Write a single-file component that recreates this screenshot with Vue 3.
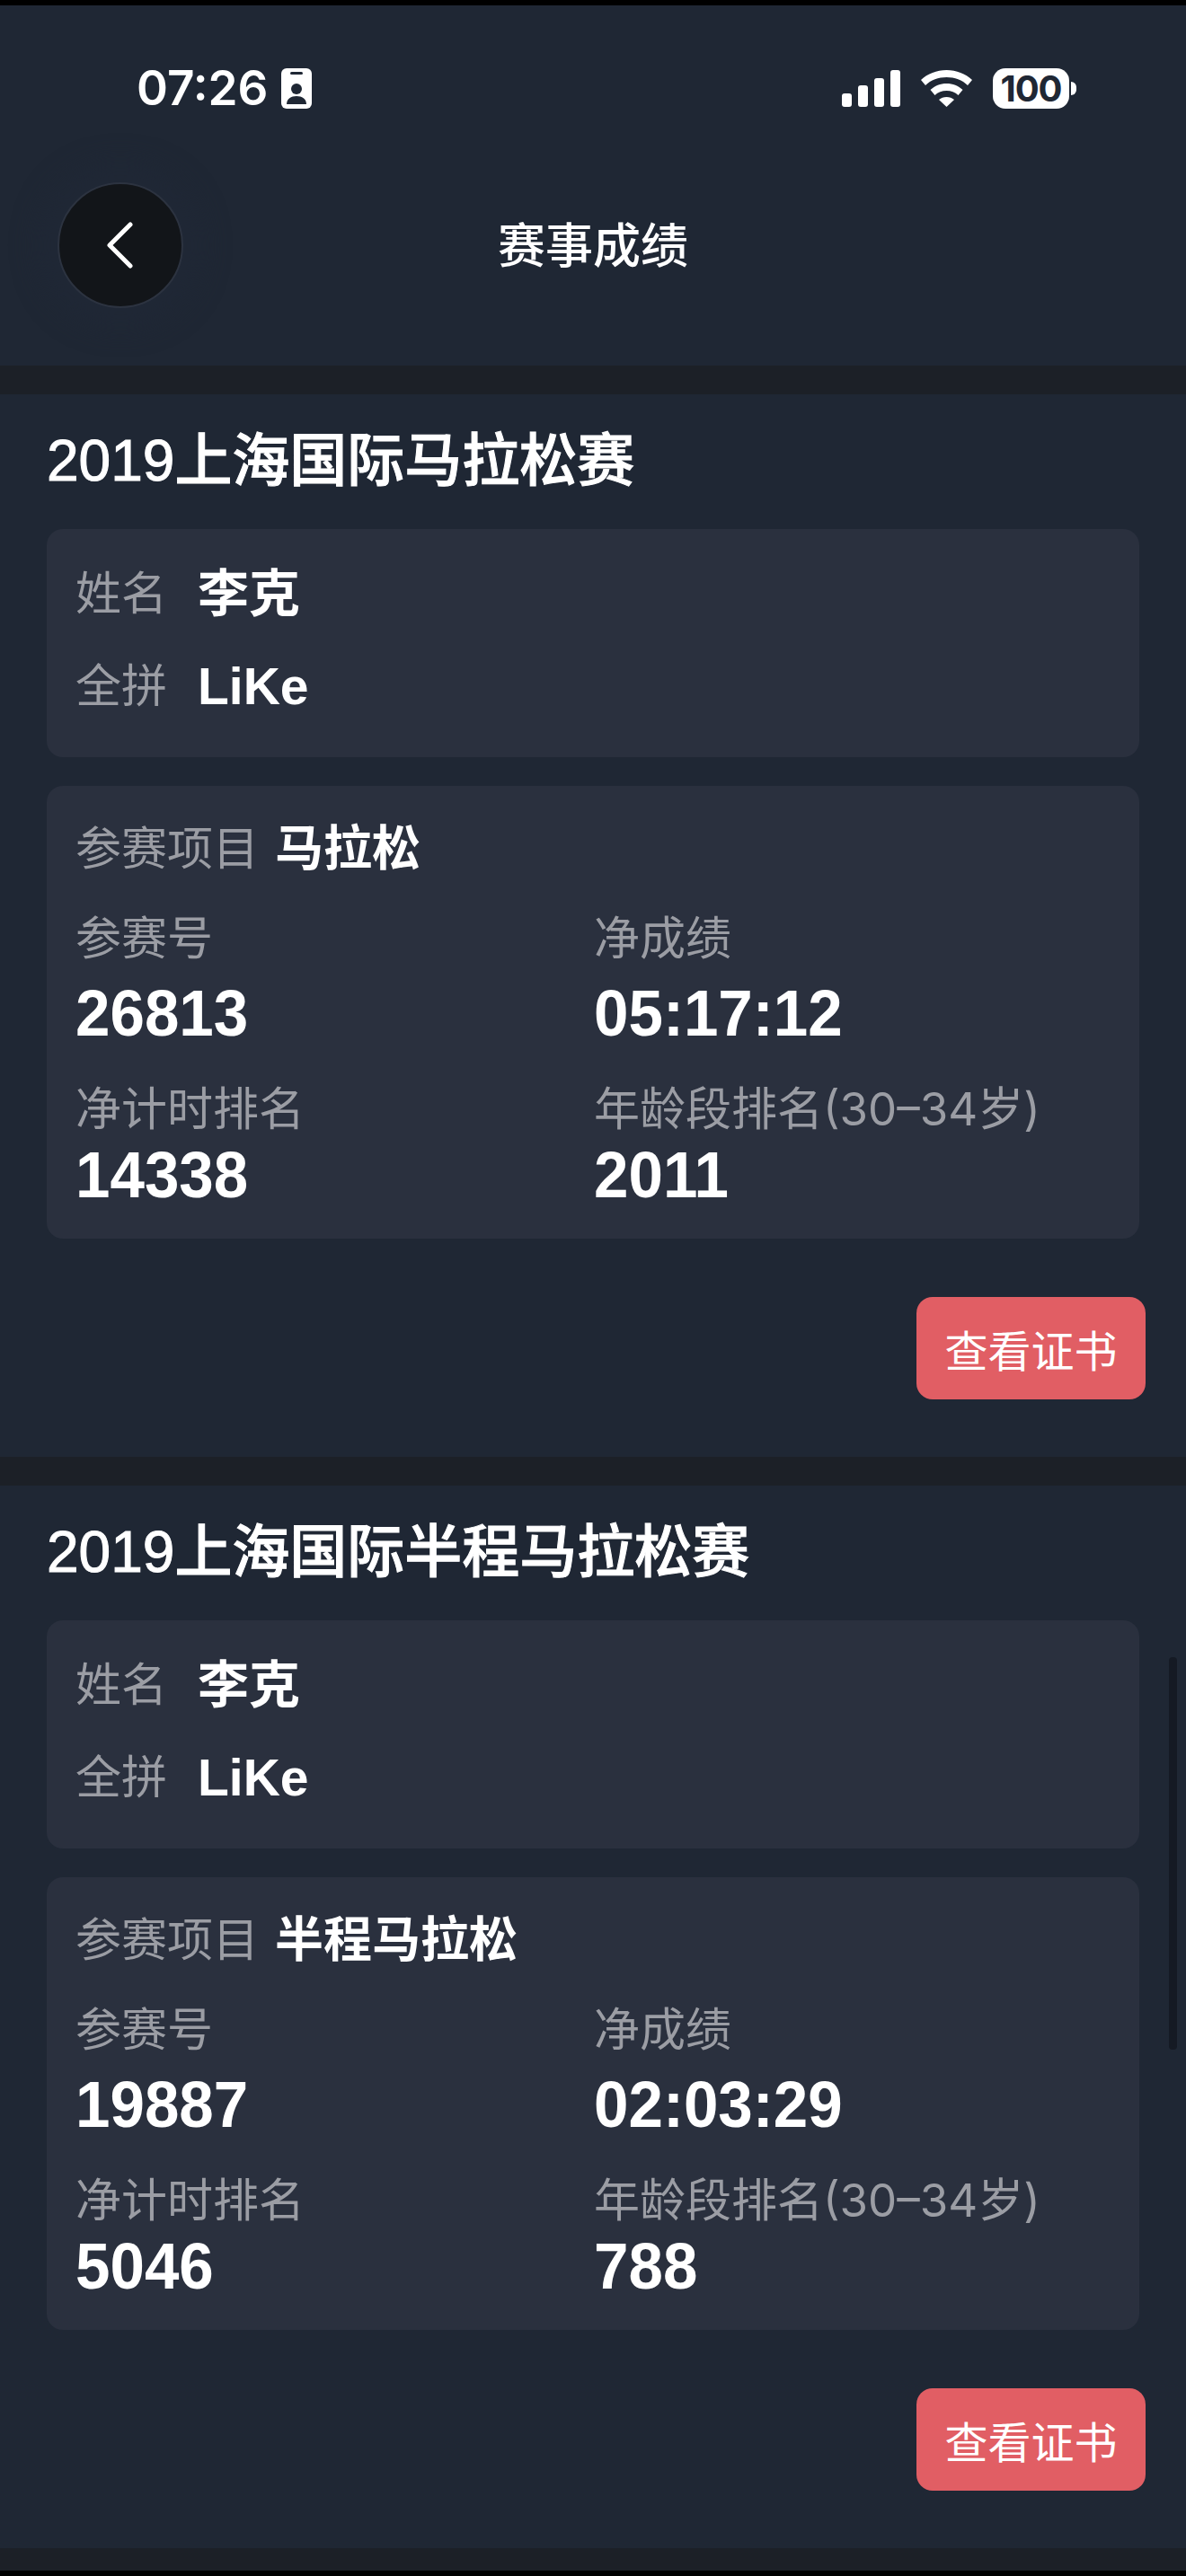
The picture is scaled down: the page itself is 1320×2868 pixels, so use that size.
<template>
  <div class="phone">
    <div class="cap"></div>
    <header class="top">
      <div class="status">
        <div class="status-left">
          <span class="clock">07:26</span>
          <svg class="badge" width="34" height="45" viewBox="0 0 34 45">
            <rect width="34" height="45" rx="6" fill="#fff" />
            <rect x="10" y="4" width="14" height="3" rx="1.5" fill="#1f2734" />
            <circle cx="17" cy="23" r="6" fill="#1f2734" />
            <path d="M6 40c0-6 5-9 11-9s11 3 11 9z" fill="#1f2734" />
          </svg>
        </div>
        <div class="status-right">
          <svg width="65" height="41" viewBox="0 0 65 41">
            <rect x="0" y="26" width="11" height="15" rx="3" fill="#fff" />
            <rect x="18" y="17" width="11" height="24" rx="3" fill="#fff" />
            <rect x="36" y="9" width="11" height="32" rx="3" fill="#fff" />
            <rect x="54" y="0" width="11" height="41" rx="3" fill="#fff" />
          </svg>
          <svg class="wifi" width="57" height="41" viewBox="0 0 57 41">
            <path d="M28.5 0c11 0 21 4 28.5 11l-5 6c-6-6-14.500-9-23.500-9S11 11 5 17L0 11C7.500 4 17.500 0 28.500 0z" fill="#fff" />
            <path d="M28.500 15c7 0 13 2.500 18 7l-5 6c-3.500-3.500-8-5-13-5s-9.500 1.500-13 5l-5-6c5-4.500 11-7 18-7z" fill="#fff" />
            <path d="M28.500 30c3.500 0 6 1 8.500 3l-8.500 8-8.500-8c2.500-2 5-3 8.500-3z" fill="#fff" />
          </svg>
          <div class="battery">
            <span class="battery-body">100</span>
            <span class="battery-tip"></span>
          </div>
        </div>
      </div>
      <div class="nav">
        <button class="back">
          <svg width="33" height="54" viewBox="0 0 33 54">
            <path d="M29 4 6 27l23 23" fill="none" stroke="#fff" stroke-width="5" stroke-linecap="round" stroke-linejoin="round" />
          </svg>
        </button>
        <h1 class="page-title">赛事成绩</h1>
      </div>
    </header>

    <section v-for="race in races" :key="race.title" class="race">
      <h2 class="race-title">{{ race.title }}</h2>
      <div class="card person">
        <div class="person-row">
          <span class="label">姓名</span>
          <span class="person-value">李克</span>
        </div>
        <div class="person-row">
          <span class="label">全拼</span>
          <span class="person-value">LiKe</span>
        </div>
      </div>
      <div class="card result">
        <div class="event">
          <span class="label">参赛项目</span>
          <span class="event-value">{{ race.event }}</span>
        </div>
        <div class="grid">
          <div v-for="item in race.items" :key="item.label" class="cell">
            <span class="label">{{ item.label }}</span>
            <span class="num">{{ item.value }}</span>
          </div>
        </div>
      </div>
      <div class="actions">
        <button class="cert">查看证书</button>
      </div>
    </section>

    <div class="scrollbar"></div>
    <div class="cap bottom"></div>
  </div>
</template>

<script setup>
const races = [
  {
    title: '2019上海国际马拉松赛',
    event: '马拉松',
    items: [
      { label: '参赛号', value: '26813' },
      { label: '净成绩', value: '05:17:12' },
      { label: '净计时排名', value: '14338' },
      { label: '年龄段排名(30–34岁)', value: '2011' },
    ],
  },
  {
    title: '2019上海国际半程马拉松赛',
    event: '半程马拉松',
    items: [
      { label: '参赛号', value: '19887' },
      { label: '净成绩', value: '02:03:29' },
      { label: '净计时排名', value: '5046' },
      { label: '年龄段排名(30–34岁)', value: '788' },
    ],
  },
]
</script>

<style>
html,
body {
  background: #1c2027;
}
</style>

<style scoped>
.phone {
  position: relative;
  width: 1320px;
  height: 2868px;
  overflow: hidden;
  background: #1c2027;
  color: #fff;
  font-family: "Liberation Sans", "Noto Sans CJK SC", sans-serif;
}
.cap {
  height: 6px;
  background: #000;
}
.top {
  height: 401px;
  margin-bottom: 32px;
  background: #1f2734;
}
.status {
  display: flex;
  justify-content: space-between;
  align-items: center;
  height: 46px;
  padding: 69px 0 0 152px;
}
.status-left {
  display: flex;
  align-items: center;
  gap: 14px;
}
.clock {
  font-family: Inter, sans-serif;
  font-size: 53px;
  font-weight: 600;
  line-height: 46px;
}
.badge {
  display: block;
}
.status-right {
  display: flex;
  align-items: center;
  margin-right: 122px;
  gap: 23px;
}
.status-right svg {
  display: block;
}
.battery {
  display: flex;
  align-items: center;
  gap: 2px;
}
.battery-body {
  width: 85px;
  height: 45px;
  border-radius: 14px;
  background: #fff;
  color: #1f2734;
  font-family: Inter, sans-serif;
  font-size: 40px;
  font-weight: 700;
  letter-spacing: -1px;
  line-height: 45px;
  text-align: center;
}
.battery-tip {
  width: 6px;
  height: 15px;
  border-radius: 0 7px 7px 0;
  background: #fff;
}
.nav {
  position: relative;
  display: flex;
  justify-content: center;
  align-items: center;
  height: 140px;
  padding-top: 4px;
  margin-top: 82px;
  box-sizing: border-box;
}
.back {
  position: absolute;
  left: 64px;
  top: 0;
  display: flex;
  justify-content: center;
  align-items: center;
  width: 140px;
  height: 140px;
  padding: 0 4px 0 0;
  border: 2px solid #2c3340;
  border-radius: 50%;
  background: #121519;
  box-shadow: 0 0 30px 20px #202836;
}
.page-title {
  margin: 0;
  font-size: 53px;
  font-weight: 500;
  line-height: 60px;
}
.race {
  height: 1183px;
  padding: 43px 52px 0;
  margin-bottom: 32px;
  box-sizing: border-box;
  background: #1f2734;
}
.race:last-of-type {
  margin-bottom: 0;
}
.race-title {
  margin: 0 0 45px;
  font-size: 64px;
  font-weight: 500;
  line-height: 62px;
  -webkit-text-stroke: 1px #fff;
}
.card {
  width: 1216px;
  box-sizing: border-box;
  border-radius: 18px;
  background: #2a303e;
  padding-left: 32px;
}
.person {
  height: 254px;
  padding-top: 42px;
  margin-bottom: 32px;
}
.person-row {
  display: flex;
  align-items: center;
  gap: 34px;
  height: 60px;
  margin-bottom: 43px;
}
.label {
  color: #9b9da4;
  font-family: Inter, "Noto Sans CJK SC", sans-serif;
  font-size: 51px;
  line-height: 60px;
  white-space: nowrap;
}
.person-value {
  font-size: 57px;
  font-weight: 600;
  line-height: 60px;
}
.event-value {
  font-size: 54px;
  font-weight: 600;
  line-height: 60px;
}
.result {
  height: 504px;
  padding-top: 40px;
}
.event {
  display: flex;
  align-items: center;
  gap: 18px;
  height: 60px;
  margin-bottom: 40px;
}
.grid {
  display: grid;
  grid-template-columns: 577px 1fr;
  row-gap: 42px;
}
.cell {
  display: flex;
  flex-direction: column;
  gap: 8px;
}
.cell:nth-child(-n + 2) {
  gap: 18px;
}
.num {
  align-self: flex-start;
  font-size: 72px;
  font-weight: 700;
  line-height: 70px;
  transform: scaleX(0.96);
  transform-origin: left;
}
.actions {
  display: flex;
  justify-content: flex-end;
  margin: 65px -7px 0 0;
}
.cert {
  width: 255px;
  height: 114px;
  padding: 0;
  border: 0;
  border-radius: 18px;
  background: #e15e64;
  color: #fff;
  font-family: inherit;
  font-size: 48px;
}
.scrollbar {
  position: absolute;
  right: 10px;
  top: 1845px;
  width: 9px;
  height: 437px;
  border-radius: 4px;
  background: #151a24;
}
.bottom {
  position: absolute;
  left: 0;
  right: 0;
  bottom: 0;
}
</style>
